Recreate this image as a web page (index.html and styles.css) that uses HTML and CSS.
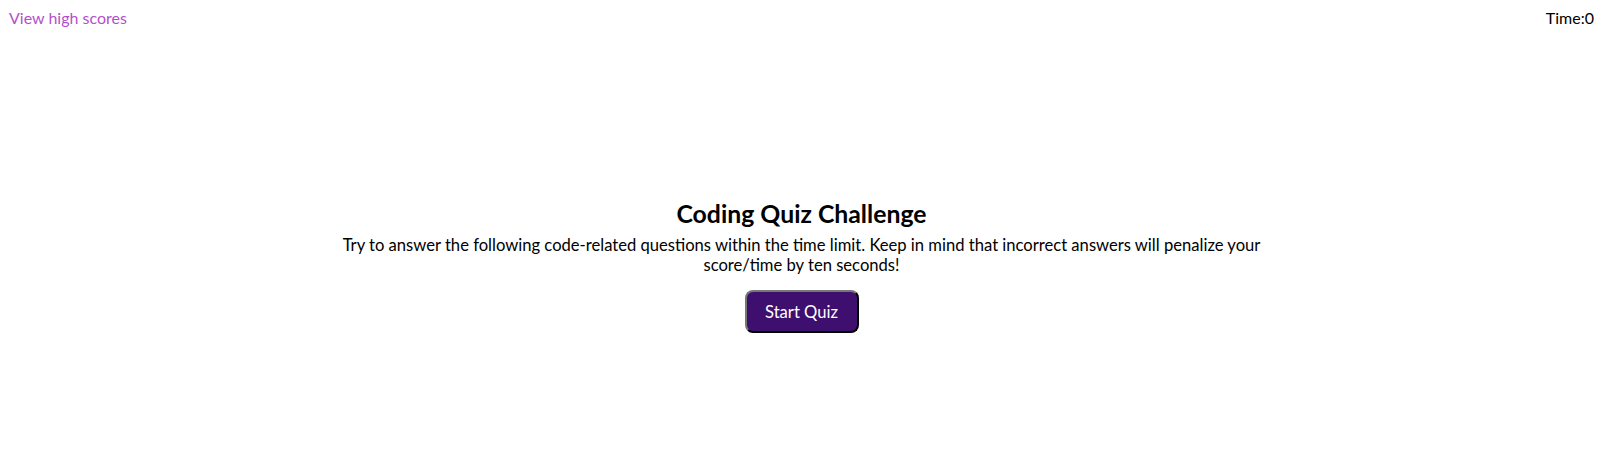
FILE: index.html
```html
<!DOCTYPE html>
<html lang="en">
<head>
<meta charset="utf-8">
<title>Coding Quiz</title>
<link rel="stylesheet" href="styles.css">
</head>
<body>
<header class="topbar">
  <a class="scores-link" href="#">View high scores</a>
  <div class="timer">Time:<span>0</span></div>
</header>
<main class="intro">
  <h1 class="intro-title">Coding Quiz Challenge</h1>
  <p class="intro-text">Try to answer the following code-related questions within the time limit. Keep in mind that incorrect answers will penalize your score/time by ten seconds!</p>
  <button class="start-btn" type="button">Start Quiz</button>
</main>
</body>
</html>
```
FILE: styles.css
```css
html, body {
  margin: 0;
  padding: 0;
  background: #fff;
}
body {
  font-family: Lato, "Open Sans", sans-serif;
  font-size: 16px;
  color: #000;
}
.topbar {
  display: flex;
  justify-content: space-between;
  align-items: center;
  padding: 8px 9px 0 9px;
  line-height: 20px;
}
.scores-link {
  color: #b44fcc;
  text-decoration: none;
}
.timer {
  color: #000;
}
.intro {
  display: flex;
  flex-direction: column;
  align-items: center;
  margin-top: 171px;
}
.intro-title {
  margin: 0;
  font-size: 24.8px;
  font-weight: bold;
  line-height: 30px;
}
.intro-text {
  width: 940px;
  margin: 7px 0 0 0;
  font-size: 16.6px;
  text-align: center;
  line-height: 19.5px;
}
.start-btn {
  margin-top: 15px;
  width: 114px;
  height: 43px;
  background: #3f0f70;
  color: #fff;
  font-family: inherit;
  font-size: 16.6px;
  border-radius: 8px;
  border: 2px outset #777;
  border-right-color: #222;
  border-bottom-color: #222;
}
```
